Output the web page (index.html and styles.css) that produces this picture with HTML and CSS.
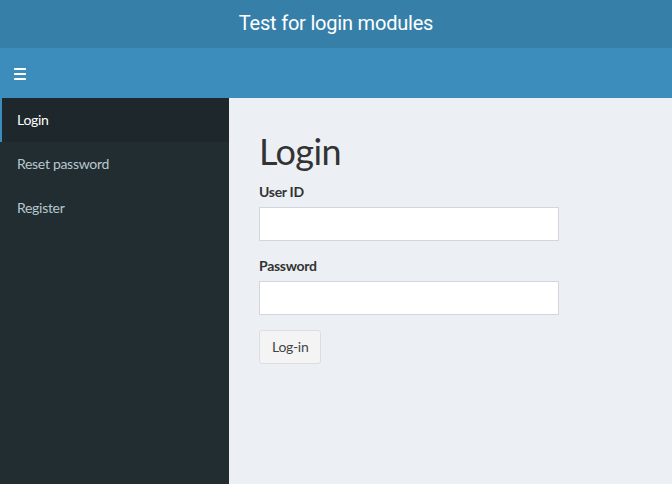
FILE: index.html
```html
<!DOCTYPE html>
<html>
<head>
<meta charset="utf-8">
<link rel="stylesheet" href="styles.css">
</head>
<body>
<header class="title-bar">Test for login modules</header>
<nav class="navbar">
  <span class="toggle" aria-label="Toggle navigation">
    <svg width="12" height="12" viewBox="0 0 12 12"><rect x="0" y="0" width="12" height="2" rx="0.4" fill="#fff"/><rect x="0" y="5" width="12" height="2" rx="0.4" fill="#fff"/><rect x="0" y="10" width="12" height="2" rx="0.4" fill="#fff"/></svg>
  </span>
</nav>
<div class="layout">
  <aside class="sidebar">
    <ul class="menu">
      <li class="item active">Login</li>
      <li class="item">Reset password</li>
      <li class="item">Register</li>
    </ul>
  </aside>
  <main class="content">
    <h1 class="page-title">Login</h1>
    <div class="form-group">
      <label class="label">User ID</label>
      <input class="input" type="text">
    </div>
    <div class="form-group">
      <label class="label">Password</label>
      <input class="input" type="password">
    </div>
    <button class="btn">Log-in</button>
  </main>
</div>
</body>
</html>
```
FILE: styles.css
```css
html, body {
  margin: 0;
  padding: 0;
  height: 100%;
}
body {
  font-family: Lato, "Open Sans", sans-serif;
  font-size: 14px;
  line-height: 20px;
  letter-spacing: -0.3px;
  color: #333;
  background: #ecf0f5;
  display: flex;
  flex-direction: column;
}
.title-bar {
  height: 48px;
  background: #367fa9;
  color: #fff;
  font-family: Roboto, "Liberation Sans", sans-serif;
  font-size: 20px;
  line-height: 46px;
  text-align: center;
  letter-spacing: -0.2px;
}
.navbar {
  height: 50px;
  background: #3c8dbc;
  display: flex;
  align-items: center;
  padding-left: 14px;
}
.toggle {
  display: flex;
  width: 12px;
  height: 12px;
  margin-top: 1px;
}
.layout {
  flex: 1;
  display: flex;
}
.sidebar {
  width: 229px;
  background: #222d32;
  flex-shrink: 0;
}
.menu {
  list-style: none;
  margin: 0;
  padding: 0;
}
.item {
  height: 44px;
  box-sizing: border-box;
  padding: 12px 5px 12px 15px;
  border-left: 2px solid transparent;
  color: #b8c7ce;
  font-size: 14px;
  line-height: 20px;
}
.item.active {
  background: #1e282c;
  border-left-color: #3c8dbc;
  color: #fff;
}
.content {
  flex: 1;
  padding: 15px 30px;
}
.page-title {
  font-size: 36px;
  font-weight: 400;
  line-height: 1.1;
  margin: 19px 0 10px;
  letter-spacing: -0.6px;
  color: #333;
}
.form-group {
  margin-bottom: 15px;
}
.label {
  display: block;
  font-weight: 700;
  margin-bottom: 5px;
}
.input {
  display: block;
  width: 300px;
  height: 34px;
  box-sizing: border-box;
  border: 1px solid #d2d6de;
  border-radius: 0;
  background: #fff;
  margin: 0;
  padding: 6px 12px;
  font-family: inherit;
  font-size: 14px;
}
.btn {
  height: 34px;
  box-sizing: border-box;
  padding: 6px 12px;
  background: #f4f4f4;
  border: 1px solid #ddd;
  border-radius: 3px;
  color: #444;
  font-family: inherit;
  font-size: 14px;
  line-height: 20px;
  letter-spacing: -0.3px;
  margin: 0;
}
```
